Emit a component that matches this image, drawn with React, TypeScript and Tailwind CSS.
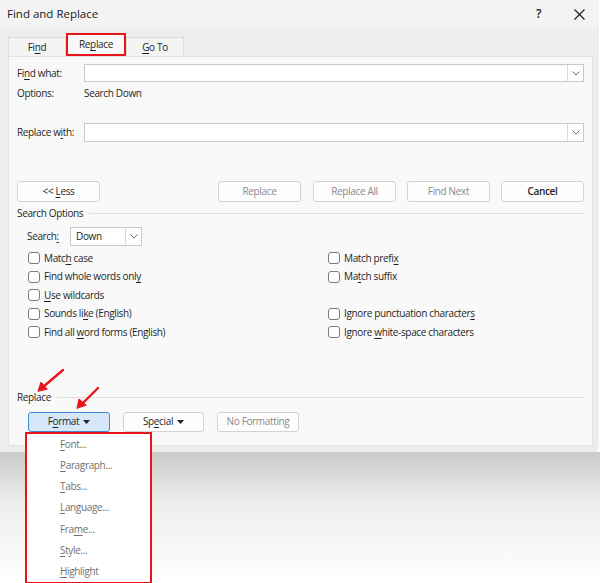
import React from 'react';

function U({ children }: { children: React.ReactNode }) {
    return <span className="underline underline-offset-2 decoration-1">{children}</span>;
}

function Chevron() {
    return (
        <svg width="8" height="5" viewBox="0 0 8 5" className="text-[#6b6b6b]">
            <polyline points="0.5,0.5 4,4 7.5,0.5" fill="none" stroke="currentColor" strokeWidth="1" />
        </svg>
    );
}

function Btn({ children, className = '' }: { children: React.ReactNode; className?: string }) {
    return (
        <div className={`flex items-center justify-center rounded-[3px] border border-[#d3d3d3] bg-[#fdfdfd] ${className}`}>
            {children}
        </div>
    );
}

function Check({ children }: { children: React.ReactNode }) {
    return (
        <div className="flex h-[18.5px] items-center gap-[4px]">
            <div className="h-[12px] w-[12px] rounded-[3px] border border-[#7c7c7c] bg-white" />
            <span>{children}</span>
        </div>
    );
}

function Caret() {
    return (
        <svg width="7" height="4" viewBox="0 0 7 4">
            <polygon points="0,0 7,0 3.5,4" fill="#1f1f1f" />
        </svg>
    );
}

export default function App() {
    return (
        <div className="relative flex h-[583px] w-[600px] flex-col overflow-hidden bg-white font-['Open_Sans',sans-serif] text-[10px] tracking-[-0.35px] text-[#1f1f1f]">
            {/* dialog */}
            <div className="flex h-[452px] w-[599px] flex-col rounded-br-[6px] bg-[#ededed]">
                {/* title bar */}
                <div className="flex h-[28px] items-center bg-[#f3f3f3] pl-[7px] pr-[14px]">
                    <span className="text-[11.5px] tracking-normal text-[#1a1a1a]">Find and Replace</span>
                    <span className="ml-auto mr-[33px] text-[12px] font-semibold">?</span>
                    <svg width="11" height="11" viewBox="0 0 11 11">
                        <path d="M0.5 0.5 L10.5 10.5 M10.5 0.5 L0.5 10.5" stroke="#1a1a1a" strokeWidth="1.1" />
                    </svg>
                </div>

                {/* tabs */}
                <div className="mt-[7px] flex h-[21px] items-end pl-[8px]">
                    <div className="flex h-[19px] w-[58px] items-center justify-center border border-b-0 border-[#dcdcdc] bg-[#f4f4f4]">
                        <span>Fi<U>n</U>d</span>
                    </div>
                    <div className="flex h-[23px] w-[60px] items-center justify-center border-2 border-[#e8141b] bg-[#f9f9f9]">
                        <span>Re<U>p</U>lace</span>
                    </div>
                    <div className="flex h-[19px] w-[58px] items-center justify-center border border-b-0 border-[#dcdcdc] bg-[#f4f4f4]">
                        <span><U>G</U>o To</span>
                    </div>
                </div>

                {/* panel */}
                <div className="ml-[8px] flex w-[585px] flex-col border border-[#e3e3e3] bg-[#f9f9f9] px-[8px] pb-[13px] pt-[7px]">
                    <div className="flex h-[18px] items-center">
                        <span className="w-[67px]">Fi<U>n</U>d what:</span>
                        <div className="flex h-full flex-1 justify-end border border-[#c9c9c9] bg-white">
                            <div className="flex w-[16px] items-center justify-center border-l border-[#d9d9d9]">
                                <Chevron />
                            </div>
                        </div>
                    </div>
                    <div className="mt-[3px] flex h-[16px] items-center">
                        <span className="w-[67px]">Options:</span>
                        <span>Search Down</span>
                    </div>
                    <div className="mt-[22px] flex h-[19px] items-center">
                        <span className="w-[67px]">Replace w<U>i</U>th:</span>
                        <div className="flex h-full flex-1 justify-end border border-[#c9c9c9] bg-white">
                            <div className="flex w-[16px] items-center justify-center border-l border-[#d9d9d9]">
                                <Chevron />
                            </div>
                        </div>
                    </div>

                    {/* action buttons */}
                    <div className="mt-[39px] flex h-[21px] text-[#8a8a8a]">
                        <Btn className="w-[83px] text-[#1f1f1f]"><span>&lt;&lt; <U>L</U>ess</span></Btn>
                        <Btn className="ml-[118px] w-[83px]">Replace</Btn>
                        <Btn className="ml-[12px] w-[83px]">Replace All</Btn>
                        <Btn className="ml-[11px] w-[83px]">Find Next</Btn>
                        <Btn className="ml-[11px] w-[83px] font-semibold text-[#1f1f1f]">Cancel</Btn>
                    </div>

                    {/* search options */}
                    <div className="mt-[4px] flex h-[14px] items-center gap-[6px]">
                        <span>Search Options</span>
                        <div className="h-px flex-1 bg-[#e0e0e0]" />
                    </div>
                    <div className="mt-[7px] flex h-[19px] items-center pl-[10px]">
                        <span className="w-[43px]">Search<U>:</U></span>
                        <div className="flex h-full w-[72px] items-center border border-[#c9c9c9] bg-white pl-[5px]">
                            <span className="flex-1">Down</span>
                            <div className="flex h-full w-[16px] items-center justify-center border-l border-[#d9d9d9]">
                                <Chevron />
                            </div>
                        </div>
                    </div>
                    <div className="mt-[3px] ml-[11px] grid grid-cols-[300px_1fr]">
                        <div className="flex flex-col">
                            <Check>Matc<U>h</U> case</Check>
                            <Check>Find whole words onl<U>y</U></Check>
                            <Check><U>U</U>se wildcards</Check>
                            <Check>Sounds li<U>k</U>e (English)</Check>
                            <Check>Find all <U>w</U>ord forms (English)</Check>
                        </div>
                        <div className="flex flex-col">
                            <Check>Match prefi<U>x</U></Check>
                            <Check>Ma<U>t</U>ch suffix</Check>
                            <div className="h-[18.5px]" />
                            <Check>Ignore punctuation character<U>s</U></Check>
                            <Check>Ignore <U>w</U>hite-space characters</Check>
                        </div>
                    </div>

                    {/* replace section */}
                    <div className="mt-[49px] flex h-[14px] items-center gap-[6px]">
                        <span>Replace</span>
                        <div className="h-px flex-1 bg-[#e0e0e0]" />
                    </div>
                    <div className="mt-[7px] ml-[11px] flex h-[20px] gap-[13px]">
                        <div className="flex w-[82px] items-center justify-center gap-[4px] rounded-[3px] border border-[#3f8ad6] bg-[#d5e7f8]">
                            <span>F<U>o</U>rmat</span>
                            <Caret />
                        </div>
                        <Btn className="w-[81px] gap-[4px]">
                            <span>Sp<U>e</U>cial</span>
                            <Caret />
                        </Btn>
                        <Btn className="w-[82px] text-[#8a8a8a]">No Formatting</Btn>
                    </div>
                </div>
            </div>

            {/* shadow under dialog */}
            <div className="w-full flex-1 bg-linear-to-b from-[#cbcbcb] via-[#eeeeee] via-40% to-white" />

            {/* format menu */}
            <div className="absolute left-[25px] top-[432px] flex h-[152px] w-[127px] flex-col border-2 border-[#e8141b] bg-white text-[#707070]">
                {[
                    <><U>F</U>ont...</>,
                    <><U>P</U>aragraph...</>,
                    <><U>T</U>abs...</>,
                    <><U>L</U>anguage...</>,
                    <>Fra<U>m</U>e...</>,
                    <><U>S</U>tyle...</>,
                    <><U>H</U>ighlight</>,
                ].map((item, i) => (
                    <div key={i} className="flex h-[21.5px] items-center pl-[33px]"><span>{item}</span></div>
                ))}
            </div>

            {/* annotation arrows */}
            <svg className="pointer-events-none absolute left-0 top-0" width="600" height="583">
                <g stroke="#e8141b" strokeWidth="2.4" strokeLinecap="round" fill="#e8141b">
                    <line x1="63" y1="370" x2="43" y2="387" />
                    <polygon points="38,391 41,382 47,389" strokeWidth="1" strokeLinejoin="round" />
                    <line x1="98" y1="388" x2="82" y2="404" />
                    <polygon points="77,408 79,399 86,405" strokeWidth="1" strokeLinejoin="round" />
                </g>
            </svg>
        </div>
    );
}
